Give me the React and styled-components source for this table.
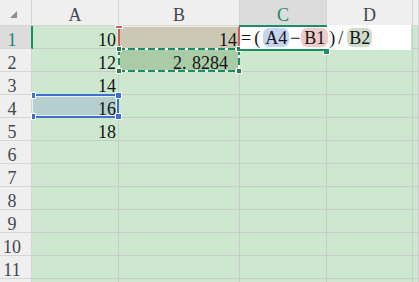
import React from 'react';
import styled, { createGlobalStyle, css } from 'styled-components';

const TEAL = '#1b8f63';
const GRID = '#c6ccc7';
const HEAD_LINE = '#d6d6d6';
const BLUE = '#3f6fd1';
const RED = '#d25b5b';
const DARK_GREEN = '#2b7a4b';

const GlobalStyle = createGlobalStyle`
  html, body {
    margin: 0;
    padding: 0;
    background: #fff;
    overflow: hidden;
  }
`;

const Sheet = styled.div`
  display: grid;
  grid-template-columns: 32px 87px 121px 87px 86px 1fr;
  grid-template-rows: 26px;
  grid-auto-rows: 23px;
  width: 419px;
  height: 282px;
  overflow: hidden;
  font-family: 'Liberation Serif', 'DejaVu Serif', serif;
  font-size: 18px;
  color: #141414;
`;

const Corner = styled.div`
  background: #efefef;
  border-right: 1px solid ${HEAD_LINE};
  border-bottom: 1px solid ${HEAD_LINE};
  padding: 11px 0 0 10px;
  box-sizing: border-box;
`;

const Triangle = styled.div`
  width: 0;
  height: 0;
  border-left: 7px solid transparent;
  border-bottom: 7px solid #8e8e8e;
`;

const ColHeader = styled.div`
  background: ${(p) => (p.$active ? '#dcdcdc' : '#efefef')};
  color: ${(p) => (p.$active ? '#178a6a' : '#43474f')};
  border-right: 1px solid ${HEAD_LINE};
  border-bottom: 1px solid ${HEAD_LINE};
  box-sizing: border-box;
  text-align: center;
  padding-top: 5px;
  line-height: 20px;
`;

const RowHeader = styled.div`
  position: relative;
  background: ${(p) => (p.$active ? '#dcdcdc' : '#efefef')};
  color: ${(p) => (p.$active ? '#178a6a' : '#43474f')};
  border-right: 1px solid ${(p) => (p.$active ? TEAL : HEAD_LINE)};
  border-bottom: 1px solid ${HEAD_LINE};
  box-sizing: border-box;
  text-align: center;
  padding: 4px 7px 0 0;
  line-height: 20px;
  ${(p) =>
    p.$active &&
    css`
      z-index: 1;
      box-shadow: 1px 0 0 ${TEAL};
    `}
`;

const tones = {
  plain: '#cde8cf',
  ref1: '#cbc8b3',
  ref2: '#a9cba6',
  picked: '#b5cfcf',
};

const Cell = styled.div`
  position: relative;
  background: ${(p) => tones[p.$tone || 'plain']};
  border-right: 1px solid ${GRID};
  border-bottom: 1px solid ${GRID};
  box-sizing: border-box;
  text-align: right;
  padding: 4px 2px 0 0;
  line-height: 20px;
  white-space: nowrap;
`;

const Handle = styled.span`
  position: absolute;
  width: ${(p) => p.$w || 5}px;
  height: ${(p) => p.$h || 5}px;
  background: ${(p) => p.$color};
  box-shadow: 0 0 0 1px #fff;
  ${(p) => (p.$top != null ? `top: ${p.$top}px;` : `bottom: ${p.$bottom}px;`)}
  ${(p) => (p.$left != null ? `left: ${p.$left}px;` : `right: ${p.$right}px;`)}
`;

const PickFrame = styled.div`
  position: absolute;
  z-index: 2;
  top: -1px;
  left: 0;
  right: -1px;
  bottom: -1px;
  border: 2px solid ${BLUE};
  border-left: none;
  box-shadow: inset 0 0 0 1px rgba(255, 255, 255, 0.7);
  pointer-events: none;
`;

const RefFrame = styled.div`
  position: absolute;
  z-index: 2;
  top: 0;
  left: -1px;
  right: -1px;
  bottom: -1px;
  border-left: 2px solid ${RED};
  border-right: 2px solid ${RED};
  border-top: 1px solid #f3efe6;
`;

const ants = (dir) =>
  `repeating-linear-gradient(${dir}, ${TEAL} 0 7px, #fff 7px 10px)`;

const AntsFrame = styled.div`
  position: absolute;
  z-index: 2;
  top: -1px;
  left: -1px;
  right: -1px;
  bottom: -1px;
  background:
    ${ants('90deg')} top left / 100% 2px no-repeat,
    ${ants('90deg')} bottom left / 100% 2px no-repeat,
    ${ants('180deg')} top left / 2px 100% no-repeat,
    ${ants('180deg')} top right / 2px 100% no-repeat;
`;

const Value = styled.span`
  position: relative;
  z-index: 3;
  padding-right: ${(p) => p.$pad || 0}px;
`;

const Dot = styled.span`
  display: inline-block;
  width: 10px;
  text-align: left;
`;

const Editor = styled.div`
  position: absolute;
  z-index: 4;
  top: -1px;
  left: 0;
  width: 171px;
  height: 25px;
  background: #fff;
  display: flex;
  align-items: flex-start;
  padding: 3px 0 0 1px;
  box-sizing: border-box;
  text-align: left;

  &::before,
  &::after {
    content: '';
    position: absolute;
    left: -1px;
    width: 88px;
    height: 2px;
    background: ${TEAL};
  }
  &::before {
    top: 0;
  }
  &::after {
    bottom: -1px;
  }
`;

const Token = styled.span`
  display: inline-block;
  height: 19px;
  box-sizing: border-box;
  padding-top: 2px;
  line-height: 17px;
  margin-left: ${(p) => p.$ml || 0}px;
`;

const pillColors = {
  blue: '#c6d4f0',
  red: '#efcbcb',
  green: '#cfdccb',
};

const Pill = styled(Token)`
  background: ${(p) => pillColors[p.$color]};
  border-radius: 6px;
  padding-left: ${(p) => p.$px || 2}px;
  padding-right: ${(p) => p.$px || 2}px;
`;

// E is only a sliver at the right edge; its letter falls outside the view
const columns = ['A', 'B', 'C', 'D', 'E'];
const labelled = ['A', 'B', 'C', 'D'];
const aValues = ['10', '12', '14', '16', '18'];

function renderCell(row, col) {
  const key = `${col}${row}`;
  if (col === 'A') {
    const v = aValues[row - 1];
    return (
      <Cell key={key} $tone={row === 4 ? 'picked' : 'plain'}>
        {v && <Value>{v}</Value>}
        {row === 4 && (
          <PickFrame>
            <Handle $color={BLUE} $w={3} $h={5} $top={-3} $left={0} />
            <Handle $color={BLUE} $w={3} $h={5} $bottom={-3} $left={0} />
            <Handle $color={BLUE} $top={-3} $right={-4} />
            <Handle $color={BLUE} $bottom={-3} $right={-4} />
          </PickFrame>
        )}
      </Cell>
    );
  }
  if (col === 'B' && row === 1) {
    return (
      <Cell key={key} $tone="ref1">
        <Value>14</Value>
        <RefFrame>
          <Handle $color={RED} $w={6} $h={2} $top={-1} $left={-4} />
        </RefFrame>
      </Cell>
    );
  }
  if (col === 'B' && row === 2) {
    return (
      <Cell key={key} $tone="ref2">
        <Value $pad={9}>
          2<Dot>.</Dot>8284
        </Value>
        <AntsFrame>
          <Handle $color={DARK_GREEN} $w={4} $h={4} $top={-1} $left={-1} />
          <Handle $color={DARK_GREEN} $w={4} $h={4} $bottom={-1} $left={-1} />
          <Handle $color={DARK_GREEN} $w={4} $h={4} $top={-1} $right={-1} />
          <Handle $color={DARK_GREEN} $w={4} $h={4} $bottom={-1} $right={-1} />
        </AntsFrame>
      </Cell>
    );
  }
  if (col === 'C' && row === 1) {
    return (
      <Cell key={key}>
        <Editor>
          <Token>=</Token>
          <Token $ml={3}>(</Token>
          <Pill $ml={3} $color="blue">A4</Pill>
          <Token $ml={1}>−</Token>
          <Pill $ml={1} $color="red" $px={3}>B1</Pill>
          <Token $ml={1}>)</Token>
          <Token $ml={3}>/</Token>
          <Pill $ml={4} $color="green">B2</Pill>
          <Handle $color={TEAL} $bottom={-4} $left={84} />
        </Editor>
      </Cell>
    );
  }
  return <Cell key={key} />;
}

export default function App() {
  const rows = Array.from({ length: 12 }, (_, i) => i + 1);
  return (
    <>
      <GlobalStyle />
      <Sheet>
        <Corner>
          <Triangle />
        </Corner>
        {columns.map((c) => (
          <ColHeader key={c} $active={c === 'C'}>
            {labelled.includes(c) ? c : null}
          </ColHeader>
        ))}
        {rows.map((r) => (
          <React.Fragment key={r}>
            <RowHeader $active={r === 1}>{r <= 11 ? r : null}</RowHeader>
            {columns.map((c) => renderCell(r, c))}
          </React.Fragment>
        ))}
      </Sheet>
    </>
  );
}
